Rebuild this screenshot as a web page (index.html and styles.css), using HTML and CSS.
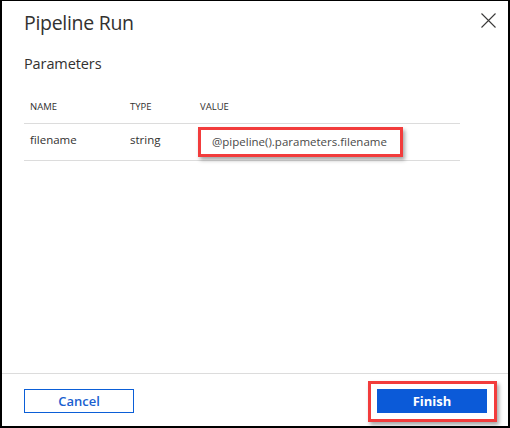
FILE: index.html
```html
<!DOCTYPE html>
<html>
<head>
<meta charset="utf-8">
<link rel="stylesheet" href="styles.css">
</head>
<body>
<div class="dialog">
  <div class="body">
    <div class="header">
      <h1 class="title">Pipeline Run</h1>
      <button class="close" aria-label="Close">
        <svg width="15" height="15" viewBox="0 0 15 15"><path d="M0.5 0.5L14.5 14.5M14.5 0.5L0.5 14.5" stroke="#3b3a39" stroke-width="1.1" fill="none"/></svg>
      </button>
    </div>
    <h2 class="section">Parameters</h2>
    <div class="table">
      <div class="row head">
        <div class="c-name">NAME</div>
        <div class="c-type">TYPE</div>
        <div class="c-value">VALUE</div>
      </div>
      <div class="row data">
        <div class="c-name">filename</div>
        <div class="c-type">string</div>
        <div class="c-value"><div class="value-box">@pipeline().parameters.filename</div></div>
      </div>
    </div>
  </div>
  <div class="footer">
    <button class="btn cancel">Cancel</button>
    <div class="finish-wrap"><button class="btn finish">Finish</button></div>
  </div>
</div>
</body>
</html>
```
FILE: styles.css
```css
* { box-sizing: border-box; }
html, body { margin: 0; padding: 0; background: #fff; }
body { font-family: "Open Sans", "Noto Sans", sans-serif; color: #323130; }
.dialog {
  width: 510px; height: 428px;
  border-top: 1px solid #000; border-left: 2px solid #000;
  border-right: 2px solid #000; border-bottom: 2px solid #000;
  display: flex; flex-direction: column;
}
.body { flex: 1; padding: 0 48px 0 22px; }
.header { display: flex; justify-content: space-between; align-items: flex-start; }
.title { margin: 9px 0 0; font-size: 19.5px; font-weight: 400; line-height: 26px; letter-spacing: -0.3px; }
.close { border: 0; background: none; padding: 0; margin: 12px -36px 0 0; width: 15px; height: 15px; display: block; }
.close svg { display: block; }
.section { margin: 18px 0 0; font-size: 14.5px; font-weight: 400; line-height: 20px; letter-spacing: -0.1px; }
.table { margin-top: 20px; }
.row { display: flex; border-bottom: 1px solid #dcdcdc; }
.row.head { font-size: 9.5px; height: 30px; padding-top: 6px; }
.row.data { font-size: 11.5px; height: 37px; align-items: flex-start; }
.c-name { width: 106px; padding-left: 6px; }
.c-type { width: 70px; }
.c-value { flex: 1; }
.row.data .c-name, .row.data .c-type { padding-top: 8px; }
.value-box {
  margin: 3px 0 0 -2px; width: 205px; height: 30px;
  border: 3px solid #f23c3c;
  box-shadow: 2px 3px 4px rgba(0,0,0,0.35);
  padding: 4px 0 0 11px; font-size: 11.5px; color: #4a4948;
}
.footer {
  height: 53px; border-top: 1px solid #dcdcdc;
  display: flex; justify-content: space-between; align-items: flex-start;
  padding: 0 11px 0 22px;
}
.btn { font-family: inherit; font-size: 13px; height: 24px; padding: 0; cursor: pointer; }
.cancel {
  margin-top: 15px; width: 110px; border: 1px solid #0b5ed7; background: #fff; color: #1a5fd0; font-weight: 600;
}
.finish-wrap {
  margin-top: 7px; width: 129px; height: 41px;
  border: 3px solid #f23c3c;
  box-shadow: 2px 3px 4px rgba(0,0,0,0.35);
  padding: 5px 0 0 6px;
}
.finish { width: 110px; border: 0; background: #0b5ad8; color: #fff; font-weight: 700; display: block; }
```
